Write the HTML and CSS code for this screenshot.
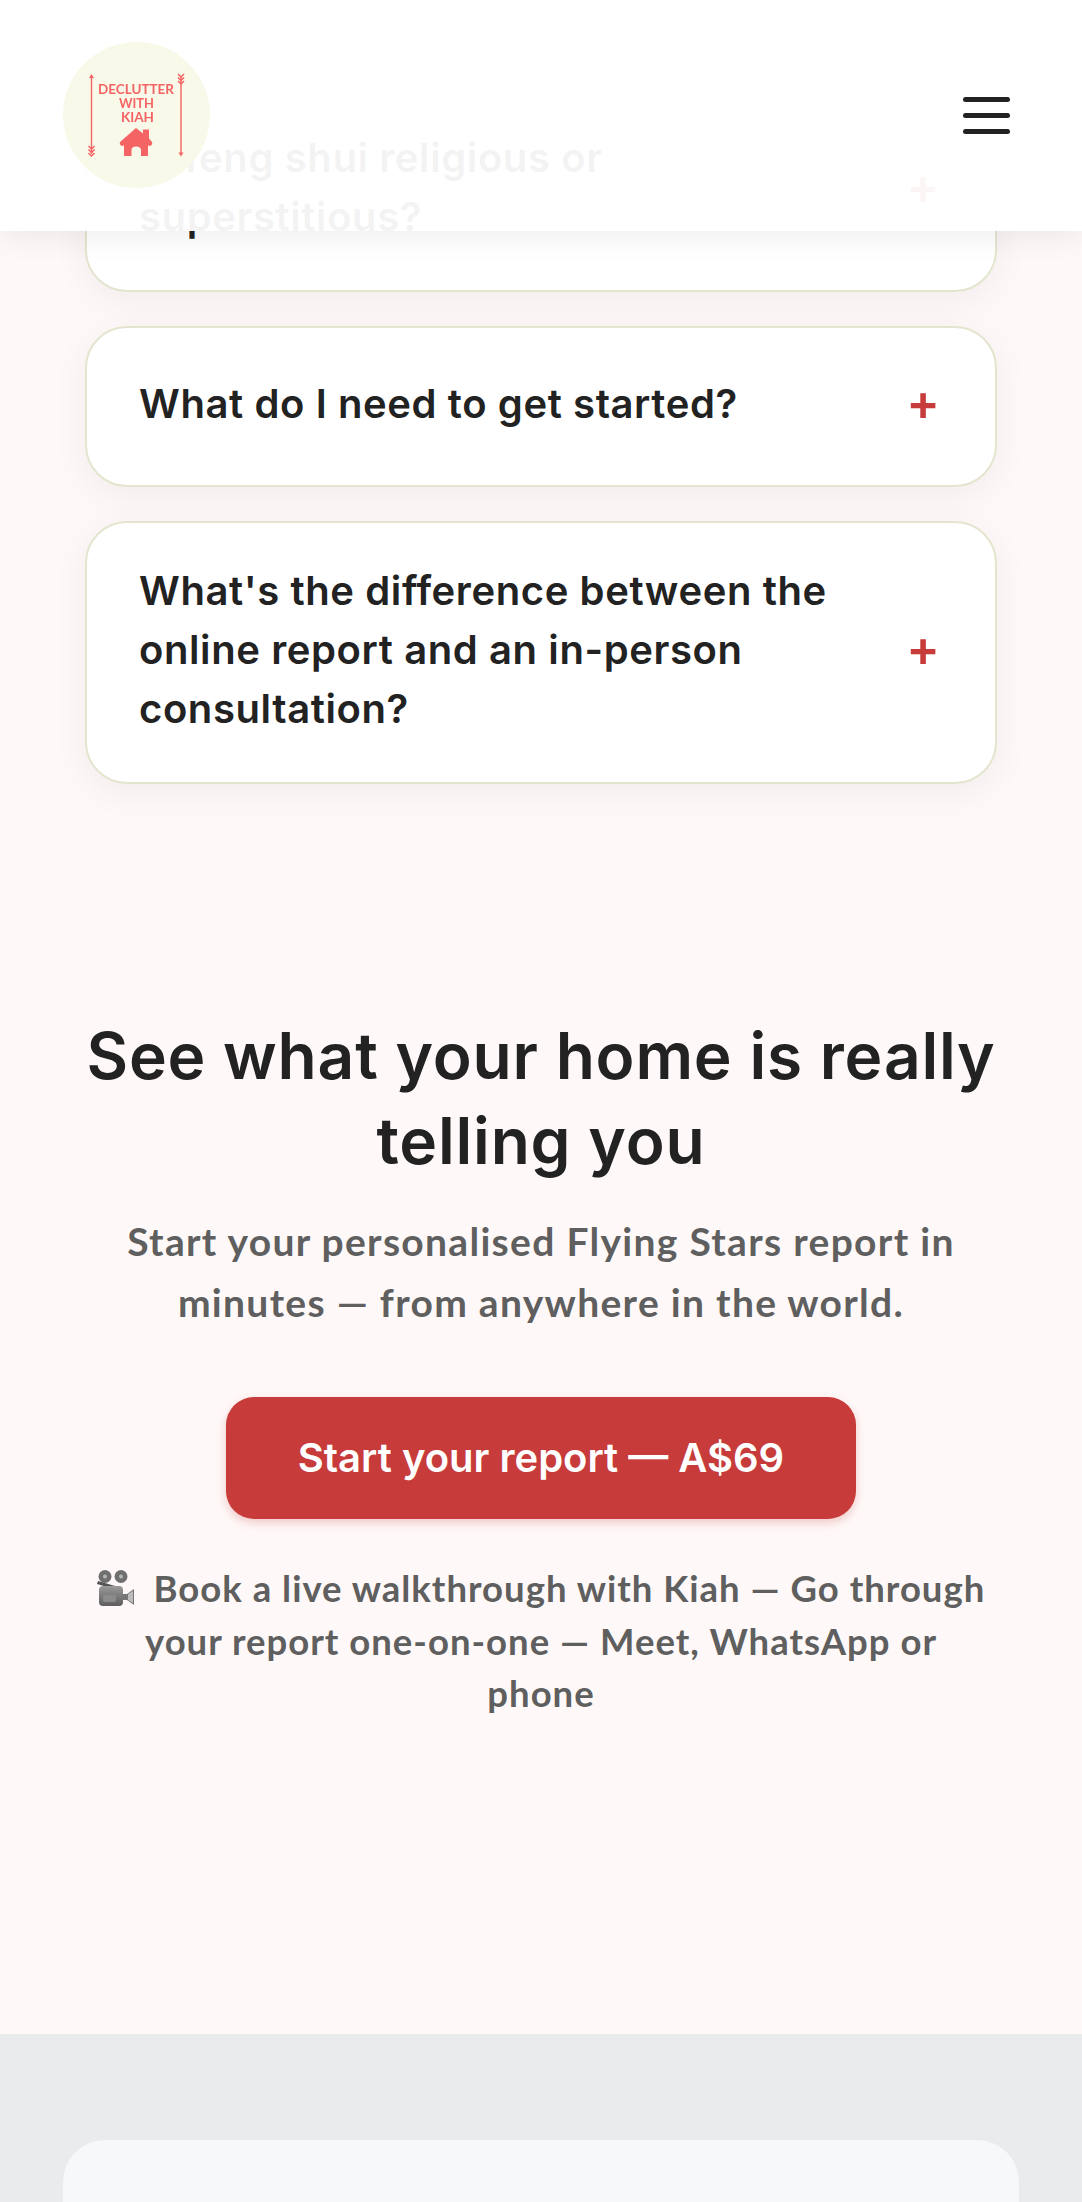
FILE: index.html
```html
<!DOCTYPE html>
<html lang="en">
<head>
<meta charset="utf-8">
<title>Declutter with Kiah</title>
<link rel="stylesheet" href="styles.css">
</head>
<body>
<header class="site-header">
  <svg class="logo" viewBox="0 0 147 146" aria-label="Declutter with Kiah">
    <ellipse cx="73.500" cy="73" rx="73.500" ry="73" fill="#f8f9e8"/>
    <g stroke="#f46464" fill="none">
      <path d="M28.500 34V112" stroke-width="1.400"/>
      <path d="M118 34V112" stroke-width="1.400"/>
      <path d="M25.500 104l3 3 3-3M25.500 107.500l3 3 3-3M25.500 111l3 3 3-3" stroke-width="1.500"/>
      <path d="M115 32l3 3 3-3M115 35.500l3 3 3-3M115 39l3 3 3-3" stroke-width="1.500"/>
    </g>
    <path d="M28.500 32l2.500 4h-5zM118 114.500l-2.500-4h5z" fill="#f46464"/>
    <g class="logo-text">
      <text x="73" y="52" textLength="76" lengthAdjust="spacingAndGlyphs">DECLUTTER</text>
      <text x="73.500" y="66" textLength="35" lengthAdjust="spacingAndGlyphs">WITH</text>
      <text x="74.500" y="80" textLength="33" lengthAdjust="spacingAndGlyphs">KIAH</text>
    </g>
    <path d="M73 86L80 91.500V87.500H86V96.500L89 100Q90 102 88 103.500Q86.500 104.500 85 103V114H78V108Q78 104.500 73 104.500Q68.500 104.500 68.500 108V114H61V103Q59.500 104.500 58 103.500Q56 102 57 100Z" fill="#f46464"/>
  </svg>
  <button class="menu" aria-label="Menu"><span></span><span></span><span></span></button>
</header>

<main class="cta-page">
  <section class="faq">
    <div class="faq-card faq-card-prev"></div>
    <div class="faq-card">
      <span class="faq-q">Is feng shui religious or superstitious?</span>
      <span class="faq-plus">+</span>
    </div>
    <div class="faq-card">
      <span class="faq-q">What do I need to get started?</span>
      <span class="faq-plus">+</span>
    </div>
    <div class="faq-card">
      <span class="faq-q">What's the difference between the online report and an in-person consultation?</span>
      <span class="faq-plus">+</span>
    </div>
  </section>

  <section class="cta">
    <h2>See what your home is really telling you</h2>
    <p class="lead">Start your personalised Flying Stars report in minutes — from anywhere in the world.</p>
    <a class="cta-btn" href="#">Start your report — A$69</a>
    <p class="note"><svg class="cam" viewBox="0 0 38 36" aria-hidden="true">
      <defs><linearGradient id="camb" x1="0" y1="0" x2="0" y2="1"><stop offset="0" stop-color="#9a9a9a"/><stop offset="1" stop-color="#5d5d5d"/></linearGradient></defs>
      <circle cx="8" cy="6.500" r="6.500" fill="#6f6f6f"/><circle cx="8" cy="6.500" r="2" fill="#b5b5b5"/>
      <circle cx="24" cy="6.500" r="6.500" fill="#6f6f6f"/><circle cx="24" cy="6.500" r="2" fill="#b5b5b5"/>
      <path d="M1 11l24 7-1 3L0 14z" fill="#555"/>
      <rect x="2" y="16" width="24" height="20" rx="4" fill="url(#camb)"/>
      <rect x="6" y="25" width="13" height="7" rx="2" fill="#8b8b8b"/>
      <path d="M26 24h4l7-5v16l-7-5h-4z" fill="#767676"/>
      <path d="M31 24l5-3v12l-5-3z" fill="#bcbcbc"/>
    </svg> Book a live walkthrough with Kiah — Go through your report one-on-one — Meet, WhatsApp or phone</p>
  </section>
</main>

<footer class="site-footer">
  <div class="footer-card"></div>
</footer>
</body>
</html>
```

FILE: styles.css
```css
* { box-sizing: border-box; }
html, body { margin: 0; padding: 0; }
body {
  height: 2202px;
  overflow: hidden;
  background: #fef9f8;
  font-family: "Inter", "Liberation Sans", sans-serif;
  color: #222;
}
.site-header {
  position: fixed;
  top: 0; left: 0; right: 0;
  height: 231px;
  padding: 42px 72px 0 63px;
  display: flex;
  justify-content: space-between;
  align-items: flex-start;
  background: rgba(255,255,255,.95);
  box-shadow: 0 6px 28px rgba(0,0,0,.07);
  z-index: 5;
}
.logo { width: 147px; height: 146px; display: block; }
.logo-text text {
  font-family: "Lato", sans-serif;
  font-weight: 700;
  font-size: 14px;
  fill: #f46464;
  text-anchor: middle;
}
.menu {
  margin: 55px 0 0;
  padding: 0;
  width: 47px;
  border: 0;
  background: none;
  display: flex;
  flex-direction: column;
  gap: 11px;
}
.menu span { display: block; height: 5px; border-radius: 3px; background: #222; }

.cta-page { margin-top: -147px; }
.faq {
  padding: 0 85px;
  display: flex;
  flex-direction: column;
  gap: 34px;
}
.faq-card {
  display: flex;
  align-items: center;
  justify-content: space-between;
  gap: 30px;
  padding: 38px 52px 44px;
  background: #fff;
  border: 2px solid #e3e5cf;
  border-radius: 42px;
  box-shadow: 0 8px 36px rgba(0,0,0,.055);
}
.faq-card-prev { height: 201px; }
.faq-q {
  max-width: 720px;
  font-size: 40px;
  letter-spacing: .6px;
  line-height: 59px;
  font-weight: 600;
  color: #222;
}
.faq-plus {
  flex: none;
  width: 40px;
  height: 75px;
  font-size: 50px;
  line-height: 73px;
  font-weight: 600;
  text-align: center;
  color: #c73b3b;
}
.cta {
  padding: 229px 63px 0;
  height: 1250px;
  text-align: center;
}
.cta h2 {
  margin: 0;
  font-size: 64px;
  letter-spacing: .8px;
  line-height: 85px;
  font-weight: 600;
  color: #222;
}
.lead {
  margin: 28px auto 0;
  max-width: 860px;
  font-family: "Lato", sans-serif;
  font-size: 39px;
  letter-spacing: 1.300px;
  line-height: 61px;
  font-weight: 700;
  color: #5f5f5f;
}
.cta-btn {
  display: block;
  width: 630px;
  height: 122px;
  margin: 64px auto 0;
  border-radius: 28px;
  background: #c73b3b;
  color: #fff;
  font-size: 40px;
  line-height: 122px;
  font-weight: 600;
  text-decoration: none;
  box-shadow: 0 4px 10px rgba(199,59,59,.25);
}
.note {
  margin: 43px auto 0;
  max-width: 895px;
  font-family: "Lato", sans-serif;
  font-size: 36.500px;
  letter-spacing: 1px;
  line-height: 52.500px;
  font-weight: 700;
  color: #5f5f5f;
}
.cam { width: 38px; height: 36px; vertical-align: -4px; margin-right: 9px; }

.site-footer {
  height: 169px;
  padding: 106px 63px 0;
  background: #e9ebed;
  overflow: hidden;
}
.footer-card {
  height: 200px;
  background: #f6f8fa;
  border-radius: 42px;
}
```
